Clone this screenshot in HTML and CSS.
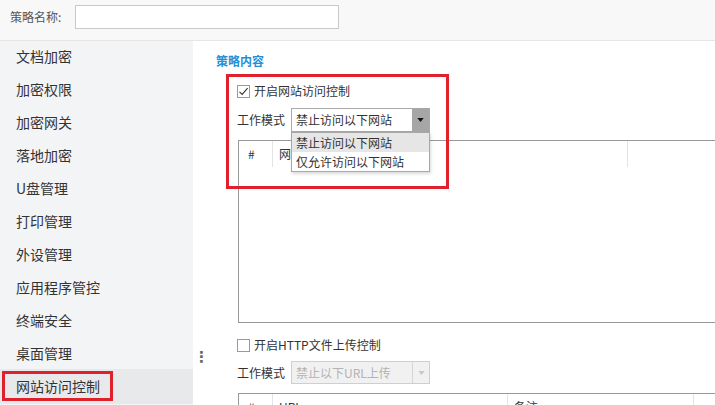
FILE: index.html
```html
<!DOCTYPE html>
<html lang="zh-CN">
<head>
<meta charset="utf-8">
<title>策略</title>
<link rel="stylesheet" href="styles.css">
</head>
<body>
<div class="page">
  <header class="topbar">
    <span class="top-label">策略名称:</span>
    <input class="top-input" type="text">
  </header>
  <div class="body">
    <nav class="sidebar">
      <div class="nav-item">文档加密</div>
      <div class="nav-item">加密权限</div>
      <div class="nav-item">加密网关</div>
      <div class="nav-item">落地加密</div>
      <div class="nav-item">U盘管理</div>
      <div class="nav-item">打印管理</div>
      <div class="nav-item">外设管理</div>
      <div class="nav-item">应用程序管控</div>
      <div class="nav-item">终端安全</div>
      <div class="nav-item">桌面管理</div>
      <div class="nav-item active"><span class="mark-side"></span>网站访问控制</div>
    </nav>
    <div class="splitter"><span class="dots">⋮</span></div>
    <main class="main">
      <div class="title">策略内容</div>
      <div class="section">
        <div class="mark-main"></div>
        <label class="check-row">
          <span class="cbox checked">
            <svg viewBox="0 0 13 13" width="13" height="13"><path d="M2.5 6.8 L5.2 9.4 L10.6 3.2" fill="none" stroke="#333" stroke-width="1.1"/></svg>
          </span>
          <span>开启网站访问控制</span>
        </label>
        <div class="mode-row">
          <span class="mode-label">工作模式</span>
          <div class="select">
            <span class="select-text">禁止访问以下网站</span>
            <span class="select-btn"><svg viewBox="0 0 8 5" width="7" height="4"><path d="M0 0 H8 L4 5 Z" fill="#111"/></svg></span>
            <ul class="dropdown">
              <li class="dd-item hover">禁止访问以下网站</li>
              <li class="dd-item">仅允许访问以下网站</li>
            </ul>
          </div>
        </div>
        <div class="grid grid-a">
          <div class="grid-head">
            <div class="cell c-num">#</div>
            <div class="cell c-site">网址</div>
            <div class="cell c-rest"></div>
          </div>
        </div>
      </div>
      <div class="section second">
        <label class="check-row">
          <span class="cbox"></span>
          <span>开启HTTP文件上传控制</span>
        </label>
        <div class="mode-row mode-row2">
          <span class="mode-label">工作模式</span>
          <div class="select disabled">
            <span class="select-text">禁止以下URL上传</span>
            <span class="select-btn"><svg viewBox="0 0 8 5" width="7" height="4"><path d="M0 0 H8 L4 5 Z" fill="#c8c8c8"/></svg></span>
          </div>
        </div>
        <div class="grid grid-b">
          <div class="grid-head">
            <div class="cell c-num">#</div>
            <div class="cell c-url">URL</div>
            <div class="cell c-note">备注</div>
            <div class="cell c-rest"></div>
          </div>
        </div>
      </div>
    </main>
  </div>
</div>
</body>
</html>
```

FILE: styles.css
```css
* { box-sizing: border-box; }
html, body { margin: 0; padding: 0; }
body {
  width: 715px;
  height: 405px;
  overflow: hidden;
  font-family: "Noto Sans CJK SC", "Noto Sans", sans-serif;
  font-size: 12px;
  color: #333;
  background: #fff;
}
.page { width: 715px; height: 405px; overflow: hidden; }

.topbar {
  height: 41px;
  background: #f8f8f8;
  border-bottom: 1px solid #e6e6e6;
  display: flex;
  align-items: flex-start;
  padding: 5px 0 0 10px;
}
.top-label {
  font-size: 12px;
  line-height: 23px;
  color: #555;
  width: 65px;
}
.top-input {
  width: 264px;
  height: 24px;
  border: 1px solid #c9c9c9;
  background: #fff;
  margin: 0;
  padding: 0;
}

.body { display: flex; height: 364px; }
.sidebar {
  width: 193px;
  background: #f3f4f6;
  display: flex;
  flex-direction: column;
  padding-top: 0;
}
.nav-item {
  height: 33px;
  line-height: 31px;
  padding-left: 16px;
  font-size: 14px;
  color: #333;
  position: relative;
  flex: none;
}
.nav-item.active {
  background: #e8e9eb;
  height: 35px;
  line-height: 35px;
  margin-top: -2px;
}
.mark-side {
  position: absolute;
  left: 2px;
  top: 2px;
  width: 111px;
  height: 30px;
  border: 3px solid #e0212b;
}

.splitter {
  width: 23px;
  display: flex;
  align-items: flex-end;
  padding-bottom: 40px;
  padding-left: 1px;
}
.dots {
  font-size: 15px;
  line-height: 16px;
  color: #666;
  font-family: "DejaVu Sans", sans-serif;
  font-weight: bold;
}

.main { flex: 1; padding-top: 12px; overflow: hidden; }
.title {
  color: #2490d4;
  font-weight: bold;
  line-height: 16px;
  height: 16px;
}
.section { margin-left: 21px; position: relative; }
.mark-main {
  position: absolute;
  left: -11px;
  top: -9px;
  width: 223px;
  height: 115px;
  border: 3px solid #e0212b;
  z-index: 5;
  pointer-events: none;
}
.check-row {
  display: flex;
  align-items: center;
  height: 16px;
  line-height: 16px;
  margin-top: 14px;
  gap: 4px;
  color: #333;
}
.cbox {
  width: 13px;
  height: 13px;
  border: 1px solid #9a9a9a;
  background: #fff;
  display: inline-block;
  position: relative;
}
.cbox svg { position: absolute; left: -1px; top: -1px; }

.mode-row {
  display: flex;
  align-items: center;
  margin-top: 9px;
  height: 24px;
}
.mode-label { width: 54px; line-height: 24px; color: #333; }
.select {
  position: relative;
  width: 139px;
  height: 24px;
  border: 1px solid #a8a8a8;
  background: #fff;
  display: flex;
}
.select-text {
  flex: 1;
  line-height: 22px;
  padding-left: 4px;
  color: #333;
}
.select-btn {
  width: 17px;
  background: #a6a6a6;
  display: flex;
  align-items: center;
  justify-content: center;
}
.dropdown {
  position: absolute;
  left: -1px;
  top: 23px;
  width: 139px;
  margin: 0;
  padding: 0;
  list-style: none;
  background: #fff;
  border: 1px solid #a8a8a8;
  box-shadow: 1px 2px 3px rgba(0,0,0,0.15);
  z-index: 10;
}
.dd-item {
  height: 19px;
  line-height: 19px;
  padding-left: 4px;
  color: #333;
}
.dd-item.hover { background: #e6e6e6; }

.select.disabled {
  background: #f1f1f1;
  border-color: #cfcfcf;
  height: 23px;
}
.select.disabled .select-text { color: #b3b3b3; line-height: 21px; }
.select.disabled .select-btn {
  background: #f1f1f1;
  border-left: 1px solid #d6d6d6;
}
.mode-row2 { margin-top: 8px; height: 23px; }

.grid {
  margin-left: 1px;
  margin-top: 8px;
  width: 520px;
  border-top: 1px solid #999;
  border-left: 1px solid #999;
  background: #fff;
}
.grid-a {
  height: 183px;
  border-bottom: 1px solid #999;
}
.grid-b { margin-top: 9px; height: 40px; }
.grid-head { display: flex; height: 26px; }
.cell {
  line-height: 26px;
  padding-left: 6px;
  border-right: 1px solid #e4e4e4;
  color: #333;
  flex: none;
}
.c-num { width: 34px; padding-left: 9px; }
.c-site { width: 355px; }
.c-url { width: 235px; }
.c-note { width: 186px; }
.c-rest { flex: 1; border-right: none; }
.second .check-row { margin-top: 14px; }
```
